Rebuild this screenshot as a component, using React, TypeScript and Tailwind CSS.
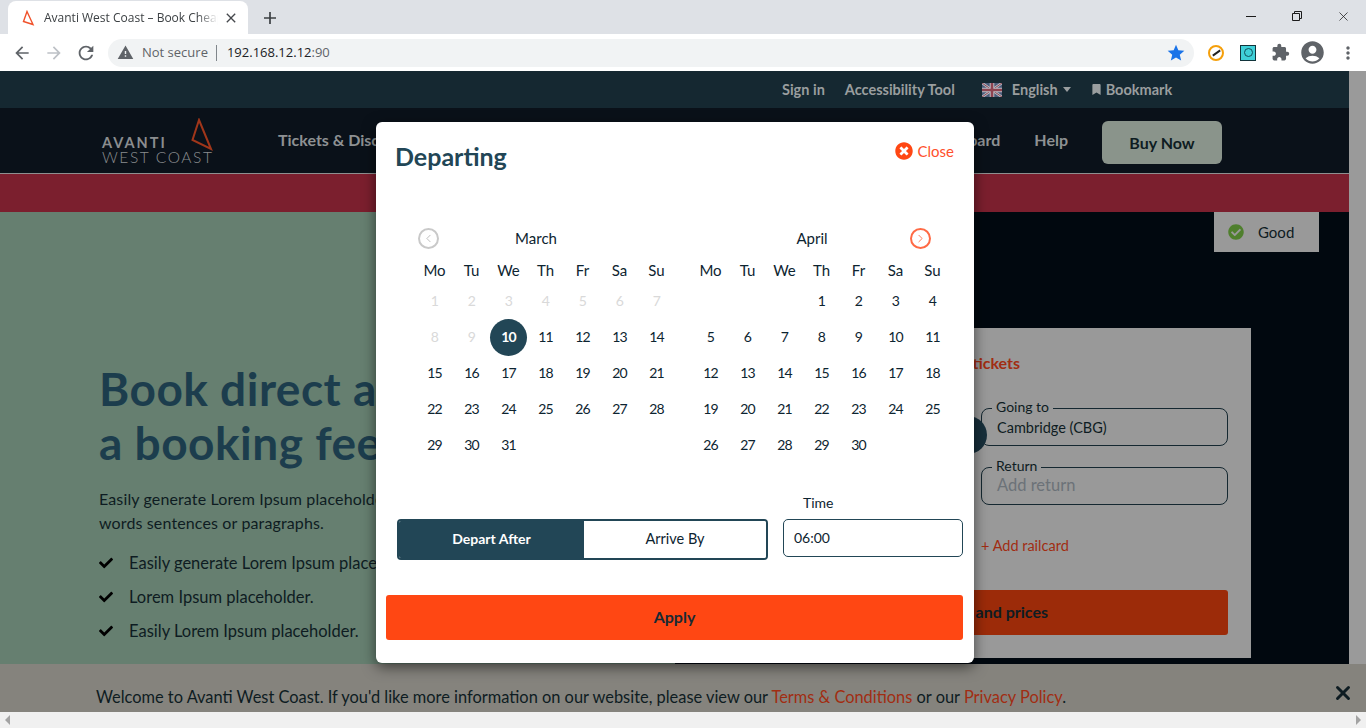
import { ChevronLeft, ChevronRight, X } from "lucide-react";
import { FaBookmark, FaCheck, FaCheckCircle, FaTimesCircle } from "react-icons/fa";
import {
    MdAccountCircle,
    MdArrowBack,
    MdArrowForward,
    MdClose,
    MdExtension,
    MdMoreVert,
    MdRefresh,
    MdStar,
    MdWarning,
} from "react-icons/md";

const weekdays = ["Mo", "Tu", "We", "Th", "Fr", "Sa", "Su"];

function Calendar({ blanks, days, muted = [], selected }: { blanks: number; days: number; muted?: number[]; selected?: number }) {
    const list = Array.from({ length: days }, (_, i) => i + 1);
    return (
        <div className="w-[259px]">
            <div className="mt-2 grid h-6 grid-cols-7 items-center text-center text-[15px] text-[#0d2430]">
                {weekdays.map((d) => (
                    <span key={d}>{d}</span>
                ))}
            </div>
            <div className="mt-[1px] grid grid-cols-7 text-center text-sm tracking-[-0.8px]">
                {Array.from({ length: blanks }, (_, i) => (
                    <span key={i} />
                ))}
                {list.map((d) => (
                    <span key={d} className="flex h-9 items-center justify-center">
                        {d === selected ? (
                            <span className="flex h-[37px] w-[37px] items-center justify-center rounded-full bg-[#224656] font-bold text-white">{d}</span>
                        ) : (
                            <span className={muted.includes(d) ? "text-[#d9d9d9]" : "text-[#0d2430]"}>{d}</span>
                        )}
                    </span>
                ))}
            </div>
        </div>
    );
}

function Field({ label, value, muted }: { label: string; value: string; muted?: boolean }) {
    return (
        <fieldset className="h-[48px] w-[247px] rounded-lg border border-[#152831] px-[15px]">
            <legend className="-ml-[5px] px-[4px] text-sm leading-5 text-[#0e1c22]">
                <span className="block -translate-y-px">{label}</span>
            </legend>
            <div className={muted ? "-mt-[4px] text-[16.5px] leading-6 text-[#6c7278]" : "-mt-[2px] text-[14.5px] leading-6 text-[#0e1c22]"}>{value}</div>
        </fieldset>
    );
}

function BrowserChrome() {
    return (
        <div className="font-[family-name:'Open_Sans',sans-serif]">
            <div className="flex h-[34px] bg-[#dee1e6] pl-[8px] pt-[1px]">
                <div className="flex h-[33px] w-[240px] items-center rounded-t-lg bg-white pl-[14px] pr-[9px]">
                    <svg width="14" height="16" viewBox="0 0 14 16" fill="none" className="shrink-0">
                        <path d="M5 1.5L11 14.5L1.5 11.5Z" stroke="#f0522b" strokeWidth="1.4" />
                    </svg>
                    <span className="ml-[8px] w-[174px] whitespace-nowrap text-[12px] text-[#3c4043] [mask-image:linear-gradient(90deg,#000_88%,transparent)]">Avanti West Coast – Book Cheap</span>
                    <MdClose className="ml-auto text-[16px] text-[#45484c]" />
                </div>
                <div className="ml-[16px] flex h-[33px] items-center">
                    <svg width="12" height="12" viewBox="0 0 12 12" stroke="#3c4043" strokeWidth="1.7">
                        <path d="M6 0V12M0 6H12" />
                    </svg>
                </div>
                <div className="ml-auto flex h-[30px] items-center text-[#1b1b1b]">
                    <span className="flex w-[46px] justify-center">
                        <span className="h-px w-[10px] bg-[#1b1b1b]" />
                    </span>
                    <span className="flex w-[46px] justify-center">
                        <svg width="10" height="10" viewBox="0 0 10 10" fill="none" stroke="#1b1b1b">
                            <path d="M2.5 2.5V.5H9.5V7.5H7.5M.5 2.5H7.5V9.5H.5Z" />
                        </svg>
                    </span>
                    <span className="flex w-[46px] justify-center">
                        <X size={15} strokeWidth={1.2} />
                    </span>
                </div>
            </div>
            <div className="flex h-[37px] items-center bg-white pl-[12px]">
                <MdArrowBack className="text-[20px] text-[#5f6368]" />
                <MdArrowForward className="ml-[12px] text-[20px] text-[#bdc1c6]" />
                <MdRefresh className="ml-[11px] text-[22px] text-[#5f6368]" />
                <div className="ml-[11px] flex h-[28px] w-[1086px] items-center rounded-full bg-[#f1f3f4] pl-[9px] pr-[8px]">
                    <MdWarning className="text-[17px] text-[#5f6368]" />
                    <span className="ml-[8px] text-[13px] text-[#5f6368]">Not secure</span>
                    <span className="ml-[8px] h-[16px] w-px bg-[#80868b]" />
                    <span className="ml-[10px] text-[13px] text-[#202124]">
                        192.168.12.12<span className="text-[#5f6368]">:90</span>
                    </span>
                    <MdStar className="ml-auto text-[20px] text-[#1a73e8]" />
                </div>
                <span className="ml-[14px] flex h-4 w-4 items-center justify-center rounded-full border-2 border-[#f59f0a] bg-white">
                    <span className="h-[2px] w-[9px] rotate-[-35deg] bg-[#222]" />
                </span>
                <span className="ml-[16px] flex h-4 w-4 items-center justify-center border border-[#12343b] bg-[#3fd0d8]">
                    <span className="h-[9px] w-[9px] rounded-full border border-[#12505a]" />
                </span>
                <MdExtension className="ml-[15px] text-[19px] text-[#5f6368]" />
                <MdAccountCircle className="ml-[9px] text-[27px] text-[#5f6368]" />
                <MdMoreVert className="ml-[12px] text-[20px] text-[#5f6368]" />
            </div>
        </div>
    );
}

function UkFlag() {
    return (
        <svg width="20" height="14" viewBox="0 0 20 14" className="shrink-0">
            <rect width="20" height="14" fill="#4b5a78" />
            <path d="M0 0L20 14M20 0L0 14" stroke="#b9bcc4" strokeWidth="2.6" />
            <path d="M0 0L20 14M20 0L0 14" stroke="#8e4350" strokeWidth="1" />
            <path d="M10 0V14M0 7H20" stroke="#b9bcc4" strokeWidth="4.6" />
            <path d="M10 0V14M0 7H20" stroke="#8e4350" strokeWidth="2.6" />
        </svg>
    );
}

function SiteHeader() {
    return (
        <>
            <div className="flex h-[37px] items-center bg-[#152831] pl-[782px] text-[14.5px] font-bold text-[#9a9e9f]">
                <span>Sign in</span>
                <span className="ml-[20px]">Accessibility Tool</span>
                <span className="ml-[27px]">
                    <UkFlag />
                </span>
                <span className="ml-[10px]">English</span>
                <span className="ml-[5px] h-0 w-0 border-x-[4px] border-t-[5px] border-x-transparent border-t-[#9a9e9f]" />
                <FaBookmark className="ml-[20px] text-[11px]" />
                <span className="ml-[4px]">Bookmark</span>
            </div>
            <div className="flex h-[66px] items-center border-b border-[#8f8f8f] bg-[#0a1119] pl-[102px] pr-[127px]">
                <div className="relative mt-[18px] w-[110px] text-[#8b8d8f]">
                    <div className="text-[14.5px] font-bold leading-[15px] tracking-[2px]">AVANTI</div>
                    <div className="text-[15.5px] font-light leading-[15px] tracking-[1.6px] whitespace-nowrap">WEST COAST</div>
                    <svg width="22" height="34" viewBox="0 0 22 34" fill="none" className="absolute -top-[17px] left-[89px]">
                        <path d="M8 2L20 31L1.5 22Z" stroke="#a0361a" strokeWidth="2" />
                    </svg>
                </div>
                <span className="-mt-[2px] ml-[66px] whitespace-nowrap text-[16px] font-bold text-[#8e9193]">Tickets &amp; Discounts</span>
                <span className="-mt-[2px] ml-auto whitespace-nowrap text-[16px] font-bold text-[#8e9193]">Board</span>
                <span className="-mt-[2px] ml-[34px] text-[16px] font-bold text-[#8e9193]">Help</span>
                <button className="ml-[34px] mt-[4px] h-[43px] w-[120px] rounded-md bg-[#8a948b] text-[16px] font-bold text-[#0e1c22]">Buy Now</button>
            </div>
            <div className="h-[38px] bg-[#7b1f2e]" />
        </>
    );
}

function Hero() {
    return (
        <div className="relative flex flex-1">
            <div className="w-[675px] bg-[#667f70] pl-[99px] pt-[150px] text-[#0e1c22]">
                <h1 className="whitespace-nowrap text-[46px] font-bold leading-[54px] tracking-[0.5px] text-[#1c3d4d]">
                    Book direct a
                    <br />a booking fee
                </h1>
                <p className="mt-[17px] whitespace-nowrap text-[16px] leading-6 tracking-[0.13px]">
                    Easily generate Lorem Ipsum placeholder
                    <br />
                    words sentences or paragraphs.
                </p>
                <ul className="mt-[11px] text-[16.5px]">
                    {["Easily generate Lorem Ipsum placeh", "Lorem Ipsum placeholder.", "Easily Lorem Ipsum placeholder."].map((t) => (
                        <li key={t} className="flex h-[34px] items-center whitespace-nowrap">
                            <FaCheck className="mr-[16px] text-[14px] text-black" />
                            {t}
                        </li>
                    ))}
                </ul>
            </div>
            <div className="flex-1 bg-[#01080f] pl-[125px] pt-[116px]">
                <div className="flex h-[330px] w-[451px] flex-col items-end bg-[#999999] pr-[23px] pt-[25px]">
                    <div className="flex w-[247px] justify-end pr-[208px]">
                        <span className="whitespace-nowrap text-[16px] font-bold leading-5 text-[#a12d12]">tickets</span>
                    </div>
                    <div className="relative mt-[25px] flex flex-col gap-[11px]">
                        <Field label="Going to" value="Cambridge (CBG)" />
                        <Field label="Return" value="Add return" muted />
                        <span className="absolute -left-[32px] top-[18px] h-[38px] w-[38px] rounded-full bg-[#172f3b]" />
                    </div>
                    <div className="mt-[31px] w-[247px] text-[14.5px] leading-5 text-[#a12d12]">+ Add railcard</div>
                    <button className="mt-[34px] h-[45px] w-[330px] rounded-[3px] bg-[#9c2b09] pb-[2px] pr-[180px] text-right text-[16px] font-bold text-[#0e1c22]">and prices</button>
                </div>
            </div>
            <div className="absolute left-[1214px] top-0 flex h-[40px] w-[105px] items-center bg-[#999999] pl-[14px] text-[15px] text-[#0e1c22]">
                <FaCheckCircle className="mr-[14px] text-[16px] text-[#4f7f2d]" />
                Good
            </div>
        </div>
    );
}

function DepartingModal() {
    return (
        <div className="absolute left-[376px] top-[122px] h-[541px] w-[598px] rounded-md bg-white pt-[20px] text-[#0d2430] shadow-[0_4px_14px_rgba(0,0,0,0.55)]">
            <div className="flex h-[30px] items-center justify-between pl-[19px] pr-[20px]">
                <h2 className="text-[25px] font-bold text-[#224656]">Departing</h2>
                <div className="-mt-[12px] flex items-center text-[15px] text-[#ff4f2b]">
                    <FaTimesCircle className="mr-[5px] text-[18px] text-[#ff4713]" />
                    Close
                </div>
            </div>
            <div className="mt-[54px] flex gap-[17px] pl-[40px]">
                <div>
                    <div className="relative h-6 pr-[19px] text-center text-[15px] leading-6">
                        March
                        <span className="absolute left-[2px] top-[2px] flex h-[21px] w-[21px] items-center justify-center rounded-full border-2 border-[#c9c9c9] text-[#b5b5b5]">
                            <ChevronLeft size={13} strokeWidth={1.6} />
                        </span>
                    </div>
                    <Calendar blanks={0} days={31} muted={[1, 2, 3, 4, 5, 6, 7, 8, 9]} selected={10} />
                </div>
                <div>
                    <div className="relative h-6 pr-[19px] text-center text-[15px] leading-6">
                        April
                        <span className="absolute left-[218px] top-[2px] flex h-[21px] w-[21px] items-center justify-center rounded-full border-2 border-[#ff6a45] text-[#ff6a45]">
                            <ChevronRight size={13} strokeWidth={1.6} />
                        </span>
                    </div>
                    <Calendar blanks={3} days={30} />
                </div>
            </div>
            <div className="mt-[30px] flex pl-[21px]">
                <div className="pt-[26px]">
                    <div className="flex h-[41px] w-[371px] overflow-hidden rounded-[4px] border-2 border-[#224656] text-[14px]">
                        <span className="flex w-[185px] items-center justify-center bg-[#224656] pb-[2px] font-bold text-white">Depart After</span>
                        <span className="flex flex-1 items-center justify-center bg-white pb-[2px] text-[14.5px] text-[#0d2430]">Arrive By</span>
                    </div>
                </div>
                <div className="ml-[15px] w-[180px]">
                    <div className="h-[26px] pl-[20px] text-[14px] leading-5">Time</div>
                    <div className="flex h-[38px] items-center rounded-[5px] border border-[#224656] pb-[2px] pl-[10px] text-[14px]">06:00</div>
                </div>
            </div>
            <button className="ml-[10px] mt-[35px] h-[45px] w-[577px] rounded-[3px] bg-[#ff4713] pb-[2px] text-[16px] font-bold text-[#172a33]">Apply</button>
        </div>
    );
}

export default function App() {
    return (
        <div className="relative flex h-[728px] w-[1366px] flex-col overflow-hidden bg-white font-[family-name:Lato,sans-serif]">
            <BrowserChrome />
            <div className="flex h-[593px]">
                <div className="flex w-[1349px] flex-col">
                    <SiteHeader />
                    <Hero />
                </div>
                <div className="flex-1 bg-[#9a9a9a]" />
            </div>
            <div className="flex h-[48px] bg-[#85837d] pl-[96px] pr-[12px] pt-[21px] text-[16.4px] leading-6 text-[#0e1c22]">
                <p className="whitespace-nowrap">
                    Welcome to Avanti West Coast. If you'd like more information on our website, please view our{" "}
                    <span className="text-[#a12d12]">Terms &amp; Conditions</span> or our <span className="text-[#a12d12]">Privacy Policy</span>.
                </p>
                <X size={22} strokeWidth={3.2} className="ml-auto -mt-[3px] text-[#0e1c22]" />
            </div>
            <div className="flex h-[16px] items-center justify-between bg-[#f0f0f0] px-[5px]">
                <span className="h-0 w-0 border-y-[5px] border-r-[5px] border-y-transparent border-r-[#a3a3a3]" />
                <span className="h-0 w-0 border-y-[5px] border-l-[5px] border-y-transparent border-l-[#a3a3a3]" />
            </div>
            <DepartingModal />
        </div>
    );
}
